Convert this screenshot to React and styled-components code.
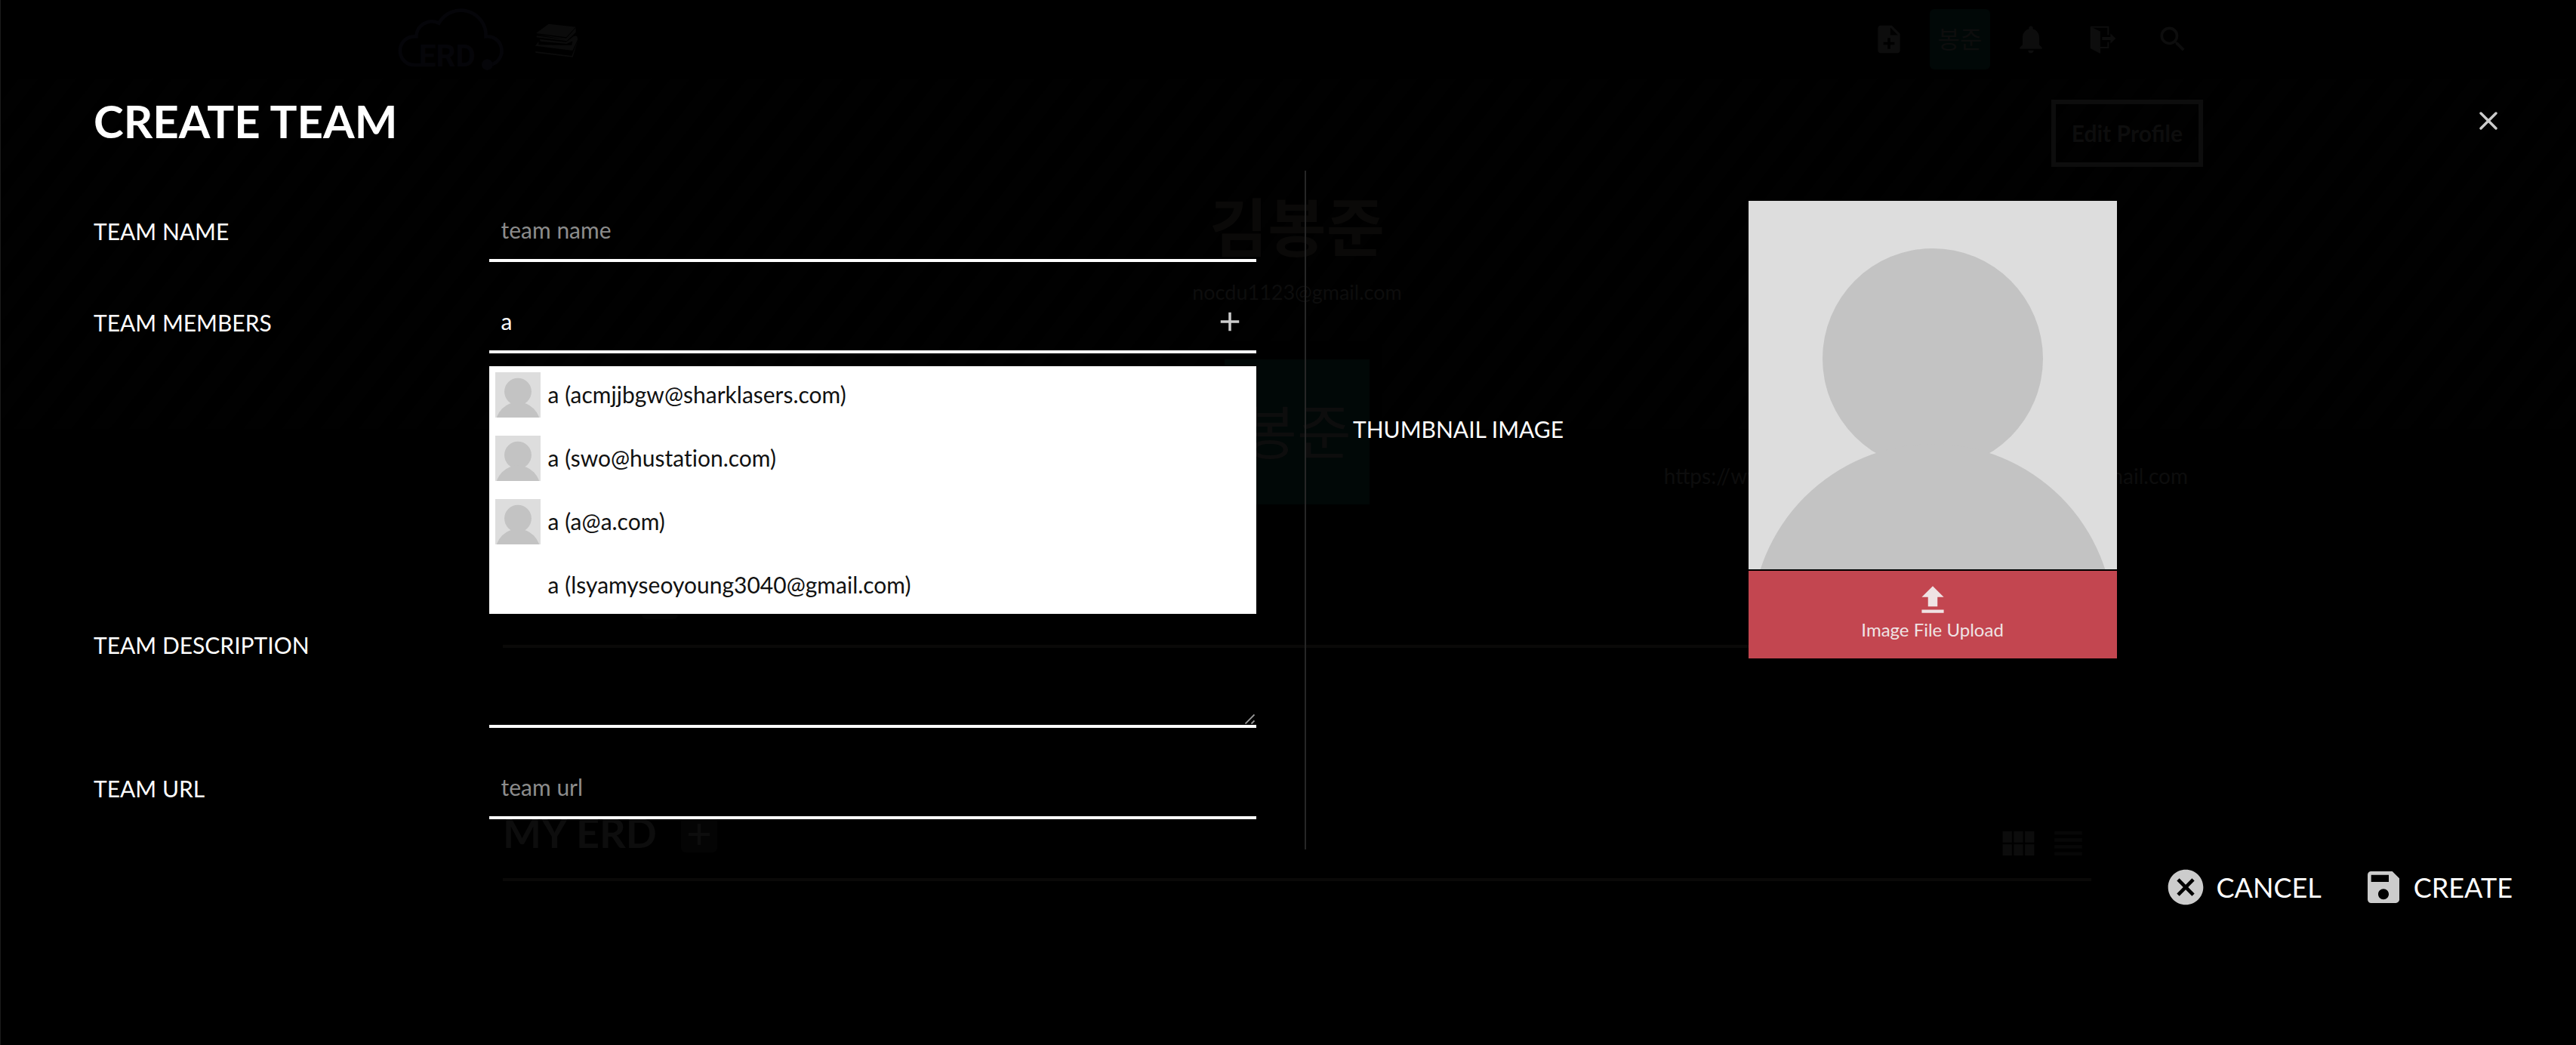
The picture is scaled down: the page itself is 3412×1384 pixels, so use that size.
import React, { useState } from "react";
import styled, { createGlobalStyle } from "styled-components";
import {
  MdAdd,
  MdCancel,
  MdNoteAdd,
  MdNotifications,
  MdSave,
  MdSearch,
} from "react-icons/md";

const GlobalStyle = createGlobalStyle`
  * { box-sizing: border-box; }
  body {
    margin: 0;
    background: #000;
    color: #fff;
    font-family: Lato, "Noto Sans CJK KR", sans-serif;
    font-size: 30px;
    line-height: 36px;
  }
  button, input, textarea { font: inherit; color: inherit; }
  button { padding: 0; border: 0; background: none; cursor: pointer; }
  h1, h2, p, ul { margin: 0; padding: 0; }
  ul { list-style: none; }
`;

const Screen = styled.div`
  position: relative;
  min-height: 100vh;
  overflow: hidden;
`;

/* ---------- profile page behind the dialog ---------- */

const Page = styled.div`
  padding-left: 24px;
  color: #0d0d0d;
`;

const Container = styled.div`
  width: 100%;
  max-width: ${(p) => p.$width}px;
  margin: 0 auto;
`;

const Header = styled(Container)`
  display: flex;
  align-items: center;
  justify-content: space-between;
  height: 104px;
`;

const Brand = styled.div`
  display: flex;
  align-items: center;
  gap: 38px;
  padding-left: 8px;
`;

const Nav = styled.nav`
  display: flex;
  gap: 14px;
`;

const NavButton = styled.button`
  display: grid;
  place-items: center;
  width: 80px;
  height: 80px;
  font-size: 44px;
`;

const Initials = styled.span`
  display: grid;
  place-items: center;
  width: ${(p) => p.$size}px;
  height: ${(p) => p.$size}px;
  border-radius: ${(p) => p.$radius}px;
  background: #010807;
  font-size: ${(p) => p.$font}px;
  line-height: 1;
`;

const Banner = styled.section`
  height: 464px;
  margin-left: -24px;
  padding: 28px 0 0 24px;
  background: repeating-linear-gradient(
    128deg,
    #000 0 20px,
    #010101 20px 40px
  );
`;

const EditRow = styled(Container)`
  display: flex;
  justify-content: flex-end;
`;

const EditButton = styled.button`
  height: 89px;
  padding: 0 21px 2px;
  border: 6px solid #0d0d0d;
  font-weight: 700;
`;

const Profile = styled.div`
  display: flex;
  flex-direction: column;
  align-items: center;
  padding-top: 32px;
`;

const ProfileName = styled.h2`
  font-size: 84px;
  line-height: 96px;
  color: #0a0908;
`;

const ProfileMail = styled.p`
  margin-top: 20px;
  font-size: 27px;
`;

const ProfilePicture = styled.div`
  margin-top: 47px;
  padding: 24px 16px;
  background: #000;
`;

const Contact = styled(Container)`
  display: flex;
  justify-content: flex-end;
  gap: 252px;
  padding: 44px 20px 2px 0;
  font-size: 28px;
`;

const Section = styled(Container)`
  display: flex;
  align-items: center;
  gap: 32px;
  height: ${(p) => p.$height}px;
  padding: ${(p) => p.$height - 120}px 0 0 ${(p) => p.$indent || 0}px;
  border-bottom: 4px solid #0a0908;
`;

const SectionTitle = styled.h2`
  padding-bottom: 4px;
  font-size: 54px;
  line-height: 64px;
`;

const SectionAdd = styled.button`
  display: grid;
  place-items: center;
  width: 48px;
  height: 48px;
  border-radius: 6px;
  background: #040404;
  font-size: 48px;
`;

const ViewModes = styled.div`
  display: flex;
  align-items: center;
  gap: 26px;
  margin-left: auto;
  padding: 24px 12px 0 0;

  button { display: grid; }
`;

/* ---------- dialog ---------- */

const Dialog = styled.div`
  position: absolute;
  inset: 0;
  padding: 124px 80px 0 123px;
  border-left: 1px solid #1c1c1c;
`;

const DialogHead = styled.div`
  display: flex;
  align-items: center;
  justify-content: space-between;
  height: 72px;
  margin-bottom: 30px;
`;

const Title = styled.h1`
  font-size: 60px;
  line-height: 72px;
`;

const CloseButton = styled.button`
  display: grid;
  margin-right: 20px;
  padding: 4px;
  color: #ccc;
`;

const Columns = styled.form`
  display: grid;
  grid-template-columns: 1fr 1fr;
`;

const Column = styled.div`
  display: flex;
  flex-direction: column;
  gap: 40px;
  padding: 40px 64px 40px 0;
`;

const ThumbColumn = styled(Column)`
  padding: 40px 0 40px 62px;
  border-left: 2px solid #262626;
`;

const Row = styled.div`
  display: grid;
  grid-template-columns: 34% 66%;
  align-items: center;
`;

const Label = styled.label`
  padding-bottom: 2px;
`;

const Field = styled.div`
  position: relative;
  display: flex;
`;

const TextInput = styled.input`
  width: 100%;
  height: 81px;
  padding: 0 16px 2px;
  border: 0;
  border-bottom: 4px solid #fff;
  border-radius: 0;
  outline: 0;
  background: transparent;

  &::placeholder { color: #8c8c8c; }
`;

const TextArea = styled.textarea`
  width: 100%;
  height: 218px;
  padding: 16px;
  border: 0;
  border-bottom: 4px solid #fff;
  outline: 0;
  background: transparent;
  resize: vertical;

  &::-webkit-resizer { display: none; }
`;

const GripMark = styled.svg`
  position: absolute;
  right: 2px;
  bottom: 5px;
  pointer-events: none;
`;

const AddMember = styled.button`
  position: absolute;
  top: 18px;
  right: 14px;
  display: grid;
  font-size: 42px;
  color: #ccc;
`;

const Members = styled.div`
  padding-bottom: 238px;
`;

const Suggestions = styled.ul`
  position: absolute;
  z-index: 1;
  top: calc(100% + 17px);
  left: 0;
  right: 0;
  display: grid;
  gap: 8px;
  background: #fff;
  color: #111;
  font-variant-ligatures: none;
`;

const Suggestion = styled.button`
  display: flex;
  align-items: center;
  gap: 10px;
  width: 100%;
  height: 76px;
  padding: 8px;
  font-variant-ligatures: none;
  text-align: left;
`;

const SuggestionText = styled.span`
  padding-bottom: 2px;
`;

const AvatarSlot = styled.span`
  display: grid;
  width: 60px;
  height: 60px;
`;

const Thumb = styled.div`
  display: flex;
  flex-direction: column;
  gap: 2px;
  width: 488px;
`;

const Upload = styled.label`
  display: flex;
  flex-direction: column;
  align-items: center;
  height: 116px;
  padding-top: 14px;
  background: #c34650;
  color: #efe3e4;
  font-size: 24px;
  line-height: 28px;
  cursor: pointer;

  input {
    position: absolute;
    width: 1px;
    height: 1px;
    opacity: 0;
  }
`;

const Actions = styled.div`
  display: flex;
  justify-content: flex-end;
  gap: 54px;
  padding: 22px 4px 0 0;
`;

const Action = styled.button`
  display: flex;
  align-items: center;
  gap: 12px;
  font-size: 36px;
  line-height: 44px;

  svg {
    font-size: 56px;
    color: #ccc;
  }
`;

/* ---------- drawings ---------- */

const Silhouette = ({ size }) => (
  <svg width={size} height={size} viewBox="0 0 488 488" aria-hidden="true">
    <rect width="488" height="488" fill="#ddd" />
    <circle cx="244" cy="209" r="146" fill="#c3c3c3" />
    <circle cx="244" cy="562" r="240" fill="#c3c3c3" />
  </svg>
);

const CloudLogo = () => (
  <svg width="144" height="94" viewBox="80 15 432 282" aria-label="ERD">
    <g fill="none" stroke="#050509" strokeWidth="14">
      <path d="M228 258H148A56 56 0 0 1 148 145H156A62 62 0 0 1 246 92A100 100 0 0 1 433 145A57 57 0 0 1 456 256" />
    </g>
    <circle cx="438" cy="257" r="22" fill="#050509" />
    <text x="166" y="265" fontFamily="Liberation Sans Narrow, Roboto, sans-serif" fontWeight="700" fontSize="122" fill="#050509">
      ERD
    </text>
  </svg>
);

const Books = () => (
  <svg width="58" height="50" viewBox="624 83 174 150" fill="#0b0b0b" aria-hidden="true">
    <path d="M680 97L788 109L750 150L630 134Z" />
    <path d="M630 138L750 154L788 113V130L752 165L632 150V144L748 160Z" />
    <path d="M645 158L648 166L752 176L775 165L772 182L640 180V166L627 184L775 203L795 160Q796 140 780 146L750 169Z" />
    <path d="M628 206L772 224L795 165L776 229L628 212Z" />
  </svg>
);

const Exit = () => (
  <svg width="36" height="38" viewBox="950 102 108 114" overflow="visible" aria-hidden="true">
    <path d="M958 108L998 128V216L958 195Z" fill="#0d0d0d" />
    <path d="M960 110H1029V142M998 192H1029V170" fill="none" stroke="#0d0d0d" strokeWidth="6" />
    <path d="M1005 150H1038V136L1059 156L1038 176V162H1005Z" fill="#0d0d0d" />
  </svg>
);

const Close = () => (
  <svg width="24" height="24" viewBox="0 0 24 24" aria-hidden="true">
    <path d="M2 2L22 22M22 2L2 22" stroke="currentColor" strokeWidth="3.4" strokeLinecap="round" />
  </svg>
);

const Grip = () => (
  <GripMark width="13" height="14" viewBox="0 0 13 14" aria-hidden="true">
    <path d="M0.5 13.5L12.5 1.5M8.5 13.5L12.5 9.5" stroke="#999" strokeWidth="1.8" />
  </GripMark>
);

const UploadArrow = () => (
  <svg width="50" height="50" viewBox="0 0 24 24" fill="currentColor" aria-hidden="true">
    <path d="M9 16h6v-6h4l-7-7-7 7h4zM5 18h14v2H5z" />
  </svg>
);

const GridIcon = () => (
  <svg width="43" height="32" viewBox="4 5 17 13" fill="#0c0c0c" aria-hidden="true">
    <path d="M4 11h5V5H4v6zm0 7h5v-6H4v6zm6 0h5v-6h-5v6zm6 0h5v-6h-5v6zm-6-7h5V5h-5v6zm6-6v6h5V5h-5z" />
  </svg>
);

const ListIcon = () => (
  <svg width="37" height="32" viewBox="4 5 16 14" fill="#070707" aria-hidden="true">
    <path d="M4 15h16v-2H4v2zm0 4h16v-2H4v2zm0-8h16V9H4v2zm0-6v2h16V5H4z" />
  </svg>
);

const people = [
  { mail: "acmjjbgw@sharklasers.com", picture: true },
  { mail: "swo@hustation.com", picture: true },
  { mail: "a@a.com", picture: true },
  { mail: "lsyamyseoyoung3040@gmail.com", picture: false },
];

export default function App() {
  const [query, setQuery] = useState("a");

  return (
    <Screen>
      <GlobalStyle />
      <Page aria-hidden="true">
        <Header $width={2400}>
          <Brand>
            <CloudLogo />
            <Books />
          </Brand>
          <Nav>
            <NavButton><MdNoteAdd /></NavButton>
            <Initials $size={80} $radius={6} $font={32}>봉준</Initials>
            <NavButton><MdNotifications /></NavButton>
            <NavButton><Exit /></NavButton>
            <NavButton><MdSearch /></NavButton>
          </Nav>
        </Header>
        <Banner>
          <EditRow $width={2400}>
            <EditButton>Edit Profile</EditButton>
          </EditRow>
          <Profile>
            <ProfileName>김봉준</ProfileName>
            <ProfileMail>nocdu1123@gmail.com</ProfileMail>
            <ProfilePicture>
              <Initials $size={192} $radius={0} $font={78}>봉준</Initials>
            </ProfilePicture>
          </Profile>
        </Banner>
        <Contact $width={2400}>
          <span>https://www</span>
          <span>nocdu1123@gmail.com</span>
        </Contact>
        <Section $width={2104} $height={208} $indent={184}>
          <SectionAdd><MdAdd /></SectionAdd>
        </Section>
        <Section $width={2104} $height={309}>
          <SectionTitle>MY ERD</SectionTitle>
          <SectionAdd><MdAdd /></SectionAdd>
          <ViewModes>
            <button><GridIcon /></button>
            <button><ListIcon /></button>
          </ViewModes>
        </Section>
      </Page>

      <Dialog role="dialog" aria-labelledby="dialog-title">
        <DialogHead>
          <Title id="dialog-title">CREATE TEAM</Title>
          <CloseButton type="button" aria-label="Close"><Close /></CloseButton>
        </DialogHead>
        <Columns id="team-form" onSubmit={(e) => e.preventDefault()}>
          <Column>
            <Row>
              <Label htmlFor="team-name">TEAM NAME</Label>
              <Field>
                <TextInput id="team-name" placeholder="team name" />
              </Field>
            </Row>
            <Members>
              <Row>
                <Label htmlFor="team-members">TEAM MEMBERS</Label>
                <Field>
                  <TextInput
                    id="team-members"
                    value={query}
                    onChange={(e) => setQuery(e.target.value)}
                  />
                  <AddMember type="button" aria-label="Add member"><MdAdd /></AddMember>
                  <Suggestions>
                    {people.map((p) => (
                      <li key={p.mail}>
                        <Suggestion type="button">
                          <AvatarSlot>{p.picture && <Silhouette size={60} />}</AvatarSlot>
                          <SuggestionText>{`a (${p.mail})`}</SuggestionText>
                        </Suggestion>
                      </li>
                    ))}
                  </Suggestions>
                </Field>
              </Row>
            </Members>
            <Row>
              <Label htmlFor="team-description">TEAM DESCRIPTION</Label>
              <Field>
                <TextArea id="team-description" />
                <Grip />
              </Field>
            </Row>
            <Row>
              <Label htmlFor="team-url">TEAM URL</Label>
              <Field>
                <TextInput id="team-url" placeholder="team url" />
              </Field>
            </Row>
          </Column>
          <ThumbColumn>
            <Row>
              <Label htmlFor="team-thumbnail">THUMBNAIL IMAGE</Label>
              <Thumb>
                <Silhouette size={488} />
                <Upload>
                  <UploadArrow />
                  Image File Upload
                  <input id="team-thumbnail" type="file" accept="image/*" />
                </Upload>
              </Thumb>
            </Row>
          </ThumbColumn>
        </Columns>
        <Actions>
          <Action type="button"><MdCancel />CANCEL</Action>
          <Action type="submit" form="team-form"><MdSave />CREATE</Action>
        </Actions>
      </Dialog>
    </Screen>
  );
}
